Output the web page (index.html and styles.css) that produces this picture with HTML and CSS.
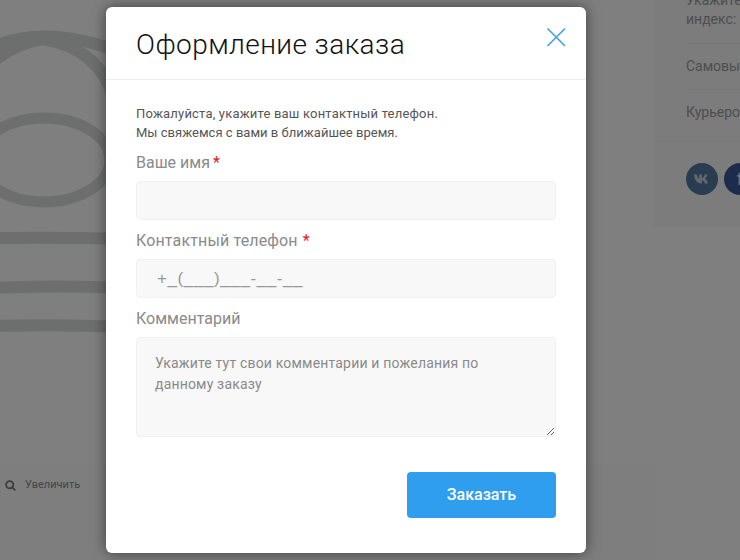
FILE: index.html
```html
<!DOCTYPE html>
<html lang="ru">
<head>
<meta charset="utf-8">
<title>Оформление заказа</title>
<link rel="stylesheet" href="styles.css">
</head>
<body>
<div class="page">
  <main class="gallery">
    <div class="photo">
      <svg class="logo" width="654" height="463" viewBox="0 0 654 463" fill="none" stroke="#dbdcdc" stroke-width="12">
        <path d="M-14 50Q42 22 120 52"/>
        <path d="M42 39Q100 48 114 100"/>
        <path d="M42 39Q-6 48 -30 90"/>
        <ellipse cx="44" cy="160" rx="66" ry="42" stroke-width="11"/>
        <path d="M-5 238Q60 237 125 239"/>
        <path d="M-5 288Q60 285 125 288"/>
        <path d="M-5 326Q60 324 125 327"/>
      </svg>
    </div>
    <div class="zoom-row">
      <svg class="zoom-icon" width="11" height="11" viewBox="0 0 11 11" fill="none" stroke="#7a7a7a" stroke-width="1.8"><circle cx="4.7" cy="4.7" r="3.6"/><path d="M7.4 7.4L10.3 10.3"/></svg>
      <span>Увеличить</span>
    </div>
  </main>
  <aside class="side">
    <div class="delivery">
      <div class="delivery-row first">Укажите<br>индекс:</div>
      <div class="delivery-row">Самовывоз</div>
      <div class="delivery-row last">Курьером</div>
    </div>
    <div class="social">
      <span class="soc vk">
        <svg width="16" height="10" viewBox="0 0 16 10"><path fill="#c8d0da" d="M0 .5h2.800c.3 2 1.300 4 2.400 4.400V.5h2.700v3.600C9 4 10.300 2.200 10.800.5h2.700c-.4 2-1.800 3.600-2.700 4.200 1 .6 2.400 2 3.200 4.800h-3C10.400 7.700 9.200 6.400 7.900 6.200v3.300h-.7C3.200 9.500.4 6 0 .5z"/></svg>
      </span>
      <span class="soc fb">f</span>
    </div>
  </aside>
  <div class="backdrop"></div>
  <section class="modal">
    <header class="modal-head">
      <h1 class="modal-title">Оформление заказа</h1>
      <button class="modal-close" type="button" aria-label="Закрыть">
        <svg width="20" height="20" viewBox="0 0 20 20" fill="none" stroke="#4aa3df" stroke-width="1.7"><path d="M1.500 1.500L19 19M19 1.500L1.500 19"/></svg>
      </button>
    </header>
    <form class="modal-body">
      <p class="intro"><span class="intro-line wide">Пожалуйста, укажите ваш контактный телефон.</span><span class="intro-line">Мы свяжемся с вами в ближайшее время.</span></p>
      <label class="label" for="name">Ваше имя<b class="req">*</b></label>
      <input class="input" id="name" type="text">
      <label class="label wide" for="phone">Контактный телефон <b class="req near">*</b></label>
      <input class="input phone" id="phone" type="text" placeholder="+_(___)___-__-__">
      <label class="label" for="comment">Комментарий</label>
      <textarea class="input area" id="comment" placeholder="Укажите тут свои комментарии и пожелания по данному заказу"></textarea>
      <div class="actions"><button class="submit" type="button">Заказать</button></div>
    </form>
  </section>
</div>
</body>
</html>
```

FILE: styles.css
```css
* { box-sizing: border-box; }
html, body { margin: 0; height: 100%; }
body { font-family: Roboto, "Liberation Sans", sans-serif; background: #fff; }

.page { position: relative; display: flex; align-items: flex-start; width: 740px; height: 560px; overflow: hidden; }

.gallery { flex: 0 0 654px; }
.photo { height: 463px; background: #fff; }
.logo { display: block; }
.zoom-row { display: flex; align-items: flex-start; gap: 9px; height: 97px; padding: 16px 0 0 5px; background: #fdfdfd; font-size: 11px; line-height: 12px; color: #8a8a8a; }
.zoom-icon { flex: none; margin-top: 1px; }

.side { flex: 0 0 110px; height: 227px; background: #f8f8f8; color: #9c9c9c; font-size: 14px; line-height: 19px; }
.delivery { display: flow-root; height: 137px; padding-left: 32px; border-bottom: 1px solid #f0f0f0; white-space: nowrap; }
.delivery-row { height: 46px; padding-top: 13px; border-top: 1px solid #f0f0f0; }
.delivery-row.first { height: 52px; margin-top: -9px; padding-top: 0; border-top: 0; }
.delivery-row.last { height: 47px; }
.social { display: flex; gap: 6px; padding: 26px 0 0 32px; }
.soc { flex: none; display: flex; align-items: center; justify-content: center; width: 32px; height: 32px; border-radius: 50%; }
.vk { background: #55799f; }
.fb { background: #3b5998; color: #ddd; font: 700 19px "Liberation Sans", sans-serif; }

.backdrop { position: absolute; inset: 0; background: rgba(0, 0, 0, .5); }

.modal { position: absolute; left: 106px; top: 7px; width: 480px; height: 546px; background: #fff; border-radius: 6px; box-shadow: 0 0 14px rgba(0, 0, 0, .5); }
.modal-head { display: flex; align-items: center; justify-content: space-between; height: 73px; padding: 0 20px 0 30px; border-bottom: 1px solid #eee; }
.modal-title { margin: 4px 0 0; font-size: 28px; font-weight: 350; letter-spacing: .42px; line-height: 36px; color: #111; }
.modal-close { display: block; width: 20px; height: 20px; padding: 0; margin-bottom: 13px; border: 0; background: none; }
.modal-close svg { display: block; }

.modal-body { padding: 24px 30px 35px; }
.intro { margin: 0 0 9px; font-size: 13px; line-height: 19px; letter-spacing: .02px; color: #555; }
.intro-line { display: block; }
.intro-line.wide { letter-spacing: .19px; }
.label { display: block; height: 24px; margin-bottom: 6px; font-size: 16px; line-height: 24px; color: #8a8a8a; }
.label.wide { letter-spacing: .14px; }
.req { margin-left: 3px; font-weight: 400; color: #e01b24; }
.req.near { margin-left: 1px; }
.input { display: block; width: 100%; height: 39px; margin-bottom: 9px; padding: 0 19px; border: 1px solid #f1f1f1; border-radius: 4px; background: #f8f8f8; font: 400 14px Roboto, sans-serif; letter-spacing: .18px; color: #333; outline: 0; }
.input::placeholder { color: #8a8a8a; opacity: 1; }
.phone { padding-left: 20px; font: 400 17px "Liberation Sans", sans-serif; letter-spacing: .6px; }
.phone::placeholder { color: #999; }
.area { height: 100px; margin-bottom: 35px; padding: 15px 18px; line-height: 21px; resize: vertical; }

.actions { display: flex; justify-content: flex-end; }
.submit { width: 149px; height: 46px; padding: 0 0 2px; border: 0; border-radius: 4px; background: #2f9eee; color: #fff; font: 500 16px Roboto, sans-serif; }
```
